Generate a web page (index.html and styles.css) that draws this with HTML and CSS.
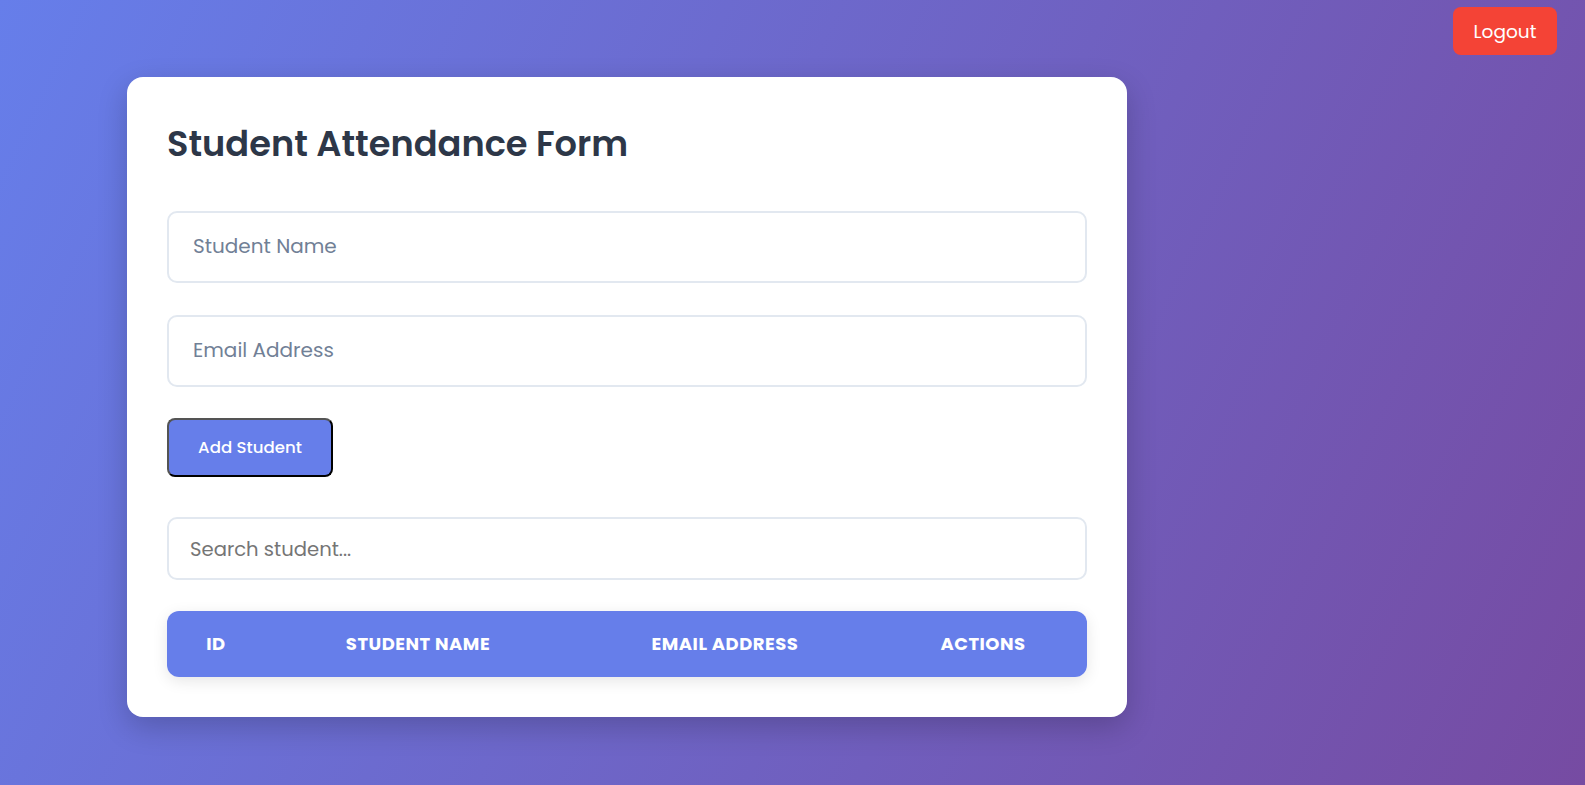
FILE: index.html
```html
<!DOCTYPE html>
<html lang="en">
<head>
<meta charset="utf-8">
<title>Student Attendance Form</title>
<link rel="stylesheet" href="styles.css">
</head>
<body>
  <header class="topbar">
    <button class="logout-btn" type="button">Logout</button>
  </header>
  <main class="page">
    <section class="card">
      <h2 class="card-title">Student Attendance Form</h2>
      <form class="student-form">
        <input class="field field-name" type="text" placeholder="Student Name">
        <input class="field field-email" type="email" placeholder="Email Address">
        <button class="add-btn" type="button">Add Student</button>
      </form>
      <input class="search" type="text" placeholder="Search student...">
      <table class="student-table">
        <colgroup>
          <col class="col-id">
          <col class="col-name">
          <col class="col-email">
          <col class="col-actions">
        </colgroup>
        <thead>
          <tr>
            <th>ID</th>
            <th>Student Name</th>
            <th>Email Address</th>
            <th>Actions</th>
          </tr>
        </thead>
        <tbody></tbody>
      </table>
    </section>
  </main>
</body>
</html>
```
FILE: styles.css
```css
* {
  box-sizing: border-box;
}

html, body {
  margin: 0;
  padding: 0;
}

body {
  min-height: 100vh;
  font-family: "Poppins", "Open Sans", "Liberation Sans", sans-serif;
  background: linear-gradient(115deg, #667eea 0%, #764ba2 100%);
  color: #2d3748;
}

.topbar {
  display: flex;
  justify-content: flex-end;
  padding: 7px 28px 0 0;
}

.logout-btn {
  width: 104px;
  height: 48px;
  border: none;
  border-radius: 8px;
  background: #f44336;
  color: #ffffff;
  font-family: inherit;
  font-size: 18.5px;
  padding: 0;
  cursor: pointer;
}

.page {
  padding: 22px 0 40px 127px;
}

.card {
  width: 1000px;
  background: #ffffff;
  border-radius: 16px;
  padding: 40px;
  box-shadow: 0 10px 30px rgba(0, 0, 0, 0.2);
}

.card-title {
  margin: 2px 0 42px;
  font-size: 35.2px;
  line-height: 50px;
  font-weight: 600;
  color: #2d3748;
}

.student-form {
  display: flex;
  flex-direction: column;
  align-items: flex-start;
}

.field {
  width: 100%;
  height: 72px;
  padding: 0 24px 3px;
  border: 2px solid #e2e8f0;
  border-radius: 10px;
  font-family: inherit;
  font-size: 20px;
  color: #2d3748;
  background: #ffffff;
  outline: none;
}

.field::placeholder {
  color: #718096;
}

.field-email {
  margin-top: 32px;
}

.add-btn {
  margin-top: 31px;
  width: 166px;
  height: 59px;
  padding: 0;
  border: 2px solid;
  border-color: #545454 #000000 #000000 #545454;
  border-radius: 8px;
  background: #667eea;
  color: #ffffff;
  font-family: inherit;
  font-size: 16.6px;
  font-weight: 500;
  cursor: pointer;
}

.search {
  display: block;
  width: 100%;
  height: 63px;
  margin-top: 40px;
  padding: 0 21px;
  border: 2px solid #e2e8f0;
  border-radius: 10px;
  font-family: inherit;
  font-size: 19.6px;
  background: #ffffff;
  outline: none;
}

.search::placeholder {
  color: #757575;
}

.student-table {
  width: 100%;
  margin-top: 31px;
  border-collapse: collapse;
  table-layout: fixed;
  border-radius: 12px;
  overflow: hidden;
  box-shadow: 0 4px 15px rgba(0, 0, 0, 0.1);
}

.col-id { width: 98px; }
.col-name { width: 306px; }
.col-email { width: 308px; }
.col-actions { width: 208px; }

.student-table th {
  height: 66px;
  padding: 0 20px 1px;
  background: #667eea;
  color: #ffffff;
  font-size: 18px;
  font-weight: 700;
  text-transform: uppercase;
  letter-spacing: 0.5px;
  text-align: center;
}
```
